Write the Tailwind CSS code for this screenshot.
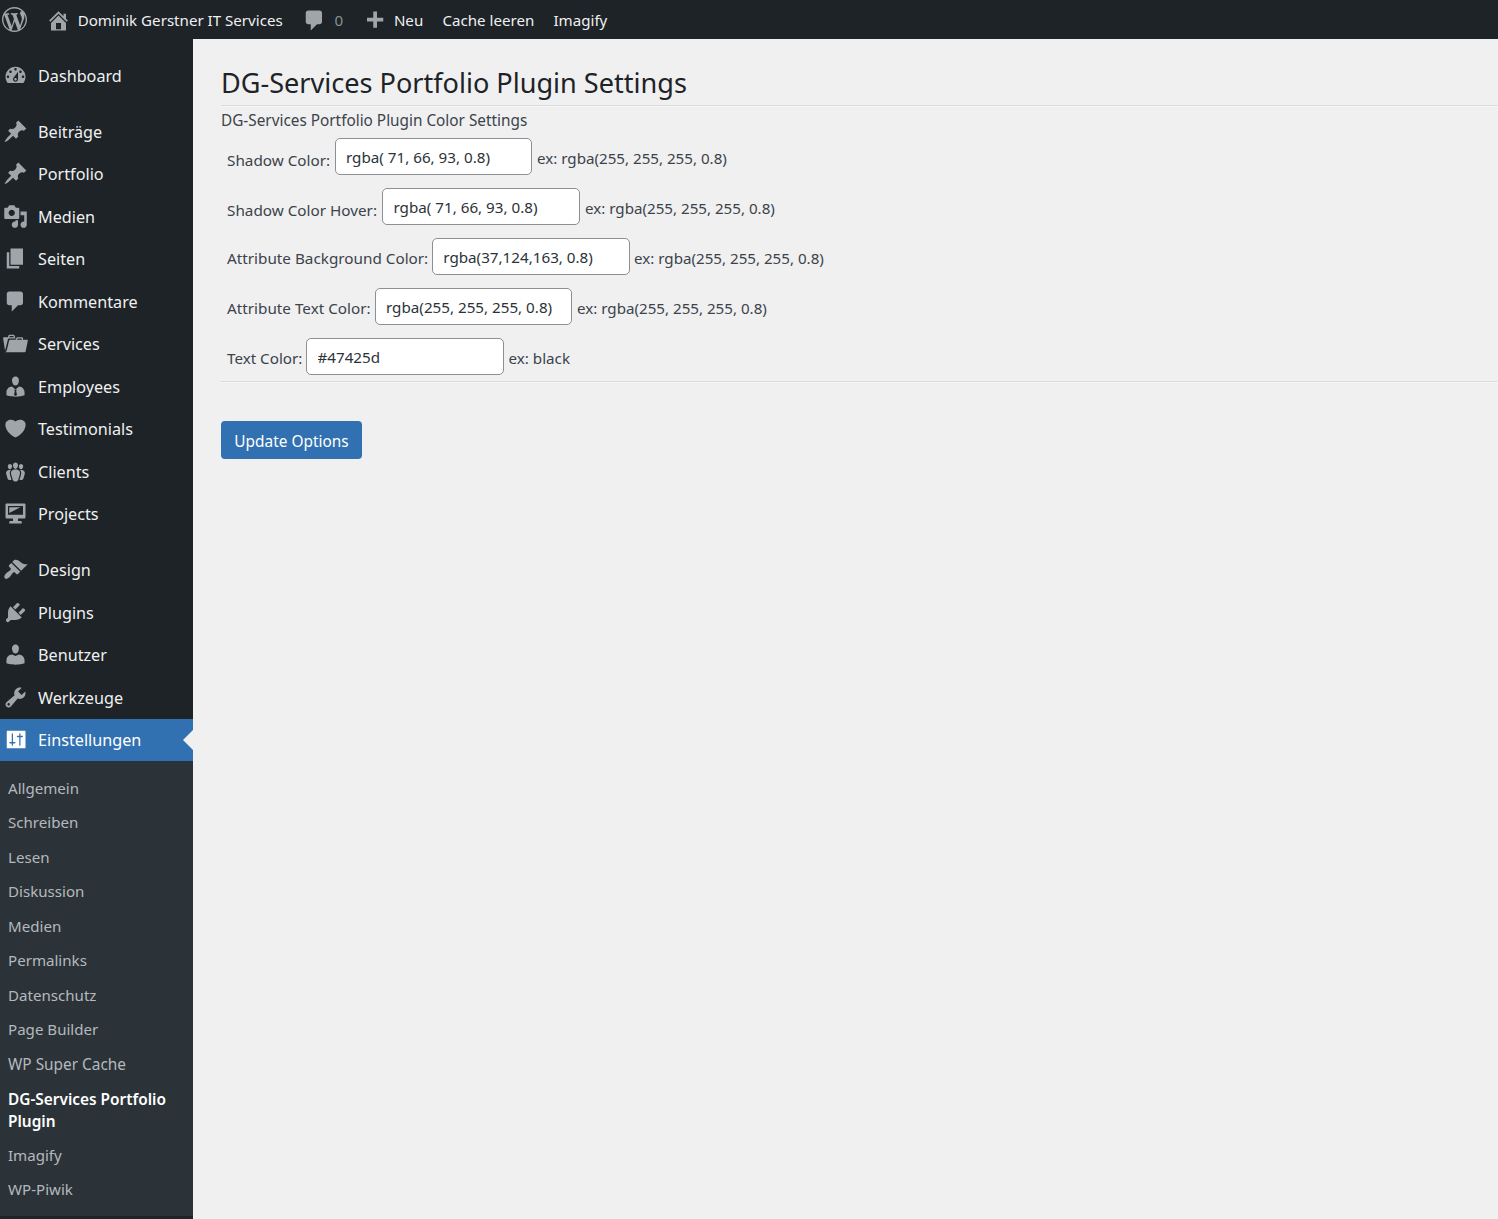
<!DOCTYPE html>
<html lang="de">
<head>
<meta charset="utf-8">
<title>DG-Services Portfolio Plugin Settings</title>
<script src="https://cdn.jsdelivr.net/npm/@tailwindcss/browser@4"></script>
</head>
<body class="h-[1219px] overflow-hidden bg-[#f0f0f1] font-['Noto_Sans','Open_Sans',sans-serif] text-[15.2px] text-[#3c434a]">

<header class="flex h-[39px] items-center bg-[#1d2327] text-[15.12px] leading-[39px] text-[#f0f0f1]">
  <a class="ml-[2px] w-[46px] shrink-0 text-[#a0a5aa]"><svg class="size-[25px]" viewBox="0 0 20 20" fill="currentColor"><path d="M20 10c0-5.51-4.49-10-10-10C4.48 0 0 4.49 0 10c0 5.52 4.48 10 10 10 5.51 0 10-4.48 10-10zM7.78 15.37L4.37 6.22c.55-.02 1.17-.08 1.17-.08.5-.06.44-1.13-.06-1.11 0 0-1.45.11-2.37.11-.18 0-.37 0-.58-.01C4.12 2.69 6.87 1.11 10 1.11c2.33 0 4.45.87 6.05 2.34-.68-.11-1.65.39-1.65 1.58 0 .74.45 1.36.9 2.1.35.61.55 1.36.55 2.46 0 1.49-1.4 5-1.4 5l-3.03-8.37c.54-.02.82-.17.82-.17.5-.05.44-1.25-.06-1.22 0 0-1.44.12-2.38.12-.87 0-2.33-.12-2.33-.12-.5-.03-.56 1.2-.06 1.22l.92.08 1.26 3.41zM17.41 10c.24-.64.74-1.87.43-4.25.7 1.29 1.05 2.71 1.05 4.25 0 3.29-1.73 6.24-4.4 7.78.97-2.59 1.94-5.2 2.92-7.78zM6.1 18.09C3.12 16.65 1.11 13.53 1.11 10c0-1.3.23-2.48.72-3.59C3.25 10.3 4.67 14.2 6.1 18.09zm4.03-6.63l2.58 6.98c-.86.29-1.76.45-2.71.45-.79 0-1.57-.11-2.29-.33.81-2.38 1.62-4.74 2.42-7.1z"/></svg></a>
  <a class="flex w-[255px] shrink-0 items-center pt-px whitespace-nowrap"><svg class="mr-[5.4px] -ml-[2px] size-[25px] shrink-0 text-[#a0a5aa]" viewBox="0 0 20 20" fill="currentColor"><path d="M16 8.5l1.53 1.53-1.06 1.06L10 4.6l-6.47 6.49-1.06-1.06L10 2.5l4 4v-2h2v4zm-6-2.46l6 5.99V18H4v-5.97zM12 17v-5H8v5h4z"/></svg><span class="pl-[1.3px]">Dominik Gerstner IT Services</span></a>
  <a class="flex w-[60px] shrink-0 items-center pt-px text-[#8b9095]"><svg class="mt-px mr-[7.4px] -ml-px size-[25px] shrink-0 text-[#a0a5aa]" viewBox="0 0 20 20" fill="currentColor"><path d="M5 2h9c1.1 0 2 .9 2 2v7c0 1.1-.9 2-2 2h-2l-5 5v-5H5c-1.1 0-2-.9-2-2V4c0-1.1.9-2 2-2z"/></svg>0</a>
  <a class="flex w-[79.5px] shrink-0 items-center pt-px"><svg class="mt-[3px] mr-[7.4px] -ml-[1.5px] size-[25px] shrink-0 text-[#a0a5aa]" viewBox="0 0 20 20" fill="currentColor"><path d="M17 7v3h-5v5H9v-5H4V7h5V2h3v5h5z"/></svg>Neu</a>
  <a class="w-[111px] shrink-0 pt-px">Cache leeren</a>
  <a class="pt-px">Imagify</a>
</header>

<div class="flex h-[1180px]">
  <aside class="w-[193px] shrink-0 bg-[#1d2327] pt-[15px]">
    <nav id="menu" class="text-[16.2px] text-[#f0f0f1]"></nav>
    <ul class="flex h-[455px] flex-col bg-[#2c3338] pt-[10.3px] pl-2 text-[15.1px] leading-[22px] text-[#b4b9be]">
      <li class="h-[34.5px] py-[6px]">Allgemein</li>
      <li class="h-[34.5px] py-[6px]">Schreiben</li>
      <li class="h-[34.5px] py-[6px]">Lesen</li>
      <li class="h-[34.5px] py-[6px]">Diskussion</li>
      <li class="h-[34.5px] py-[6px]">Medien</li>
      <li class="h-[34.5px] py-[6px]">Permalinks</li>
      <li class="h-[34.5px] py-[6px]">Datenschutz</li>
      <li class="h-[34.5px] py-[6px]">Page Builder</li>
      <li class="h-[34.5px] py-[7px] text-[15.4px]">WP Super Cache</li>
      <li class="h-[56.5px] py-[7.7px] text-[15.4px] font-semibold text-white">DG-Services Portfolio<br>Plugin</li>
      <li class="h-[34.5px] py-[6px]">Imagify</li>
      <li class="h-[34.5px] py-[6px]">WP-Piwik</li>
    </ul>
  </aside>

  <main class="grow pt-[26px] pl-[28px]">
    <h1 class="h-[40px] text-[27.08px] leading-[36px] text-[#1d2327]">DG-Services Portfolio Plugin Settings</h1>
    <hr class="border-t border-b border-t-[#dcdcde] border-b-[#f6f7f7]">
    <p class="h-[31px] text-[15.34px] leading-[26px]">DG-Services Portfolio Plugin Color Settings</p>
    <form class="pl-[6px]">
      <div class="flex h-[50px] items-start leading-[41px]"><label class="w-[108px] pt-[2px] text-[15.27px]">Shadow Color:</label><input class="mr-[5px] h-[37px] w-[197px] rounded-[5px] border border-[#8c8f94] bg-white px-[10px] leading-[35px] text-[#2c3338]" value="rgba( 71, 66, 93, 0.8)"><span class="text-[15.15px]">ex: rgba(255, 255, 255, 0.8)</span></div>
      <div class="flex h-[50px] items-start leading-[41px]"><label class="w-[155px] pt-[2px] text-[15.27px]">Shadow Color Hover:</label><input class="mr-[5px] h-[37px] w-[198px] rounded-[5px] border border-[#8c8f94] bg-white px-[10.5px] leading-[35px] text-[#2c3338]" value="rgba( 71, 66, 93, 0.8)"><span class="text-[15.15px]">ex: rgba(255, 255, 255, 0.8)</span></div>
      <div class="flex h-[50px] items-start leading-[41px]"><label class="w-[205px] text-[15.27px]">Attribute Background Color:</label><input class="mr-[4px] h-[37px] w-[198px] rounded-[5px] border border-[#8c8f94] bg-white px-[10.3px] leading-[35px] text-[#2c3338]" value="rgba(37,124,163, 0.8)"><span class="text-[15.15px]">ex: rgba(255, 255, 255, 0.8)</span></div>
      <div class="flex h-[50px] items-start leading-[41px]"><label class="w-[148px] text-[15.27px]">Attribute Text Color:</label><input class="mr-[5px] h-[37px] w-[197px] rounded-[5px] border border-[#8c8f94] bg-white px-[10px] leading-[35px] text-[#2c3338]" value="rgba(255, 255, 255, 0.8)"><span class="text-[15.15px]">ex: rgba(255, 255, 255, 0.8)</span></div>
      <div class="flex h-[43px] items-start leading-[41px]"><label class="w-[79px]">Text Color:</label><input class="mr-[4.5px] h-[37px] w-[198px] rounded-[5px] border border-[#8c8f94] bg-white px-[10.5px] leading-[35px] text-[#2c3338]" value="#47425d"><span>ex: black</span></div>
    </form>
    <hr class="border-t border-b border-t-[#dcdcde] border-b-[#f6f7f7]">
    <button class="mt-[38px] h-[38px] w-[141px] rounded-[4px] bg-[#3271b1] pt-[4px] text-[15.4px] text-white">Update Options</button>
  </main>
</div>

<script>
const icons = {
  dashboard: 'M3.76 16h12.48c1.1-1.37 1.76-3.11 1.76-5 0-4.42-3.58-8-8-8s-8 3.58-8 8c0 1.89.66 3.63 1.76 5zM10 4c.55 0 1 .45 1 1s-.45 1-1 1-1-.45-1-1 .45-1 1-1zM6 6c.55 0 1 .45 1 1s-.45 1-1 1-1-.45-1-1 .45-1 1-1zm8 0c.55 0 1 .45 1 1s-.45 1-1 1-1-.45-1-1 .45-1 1-1zm-5.37 5.55L12 7v6c0 1.1-.9 2-2 2s-2-.9-2-2c0-.57.24-1.08.63-1.45zM4 10c.55 0 1 .45 1 1s-.45 1-1 1-1-.45-1-1 .45-1 1-1zm12 0c.55 0 1 .45 1 1s-.45 1-1 1-1-.45-1-1 .45-1 1-1zm-5 3c0-.55-.45-1-1-1s-1 .45-1 1 .45 1 1 1 1-.45 1-1z',
  pin: 'M10.44 3.02l1.82-1.82 6.36 6.35-1.83 1.82c-1.05-.68-2.48-.57-3.41.36l-.75.75c-.92.93-1.04 2.35-.35 3.41l-1.83 1.82-2.41-2.41-2.8 2.79c-.42.42-3.38 2.71-3.8 2.29s1.86-3.39 2.28-3.81l2.79-2.79L4.1 9.36l1.83-1.82c1.05.69 2.48.57 3.4-.36l.75-.75c.93-.92 1.05-2.35.36-3.41z',
  media: 'M13 11V4c0-.55-.45-1-1-1h-1.67L9 1H5L3.67 3H2c-.55 0-1 .45-1 1v7c0 .55.45 1 1 1h10c.55 0 1-.45 1-1zM7 4.5c1.38 0 2.5 1.12 2.5 2.5S8.38 9.5 7 9.5 4.5 8.38 4.5 7 5.62 4.5 7 4.5zM14 6h5v10.5c0 1.38-1.12 2.5-2.5 2.5S14 17.88 14 16.5s1.12-2.5 2.5-2.5c.17 0 .34.02.5.05V9h-3V6zm-4 8.05V13h2v3.5c0 1.38-1.12 2.5-2.5 2.5S7 17.88 7 16.5 8.12 14 9.5 14c.17 0 .34.02.5.05z',
  page: 'M6 15V2h10v13H6zm-1 1h8v2H3V5h2v11z',
  comment: 'M5 2h9c1.1 0 2 .9 2 2v7c0 1.1-.9 2-2 2h-2l-5 5v-5H5c-1.1 0-2-.9-2-2V4c0-1.1.9-2 2-2z',
  folders: 'M4 5H.78c-.37 0-.74.32-.69.84l1.56 9.99S3.5 8.47 3.86 6.7c.11-.53.61-.7.98-.7H10s-.7-2.08-.77-2.31C9.11 3.25 8.89 3 8.45 3H5.14c-.36 0-.7.23-.8.64C4.25 4.04 4 5 4 5zm4.88 0h-4s.42-1 .87-1h2.13c.48 0 1 1 1 1zM2.67 16.25c-.31.47-.76.75-1.26.75h15.73c.54 0 .92-.31 1.03-.83.44-2.19 1.68-8.44 1.68-8.44.07-.5-.3-.73-.62-.73H16V5.53c0-.16-.26-.53-.66-.53h-3.76c-.52 0-.87.58-.87.58L10 7H5.59c-.32 0-.63.19-.69.5 0 0-1.59 6.7-1.72 7.33-.07.37-.22.99-.51 1.42zM15.38 7H11s.58-1 1.13-1h2.29c.71 0 .96 1 .96 1z',
  businessman: 'M10 9.25c-2.27 0-2.73-3.44-2.73-3.44C7 4.02 7.82 2 9.97 2c2.16 0 2.98 2.02 2.71 3.81 0 0-.41 3.44-2.68 3.44zM7.2 10L10 12.4 12.8 10c2.4 0 4.44 2.33 4.44 4.53v2.49s-3.65 1.13-7.24 1.13c-3.65 0-7.24-1.13-7.24-1.13v-2.49c0-2.25 1.94-4.53 4.44-4.53zM8.9 12.6l.6 1-.7 3.1L10 17.6l1.2-.9-.7-3.1.6-1z',
  heart: 'M10 17.12c3.33-1.4 5.74-3.79 7.04-6.21 1.28-2.41 1.46-4.81.32-6.25-1.03-1.29-2.37-1.78-3.73-1.74s-2.68.63-3.63 1.46c-.95-.83-2.27-1.42-3.63-1.46s-2.7.45-3.73 1.74c-1.14 1.44-.96 3.84.34 6.25 1.28 2.42 3.69 4.81 7.02 6.21z',
  groups: 'M8.03 4.46c-.29 1.28.55 3.46 1.97 3.46 1.41 0 2.25-2.18 1.96-3.46-.22-.98-1.08-1.63-1.96-1.63-.89 0-1.74.65-1.97 1.63zm-4.13.9c-.25 1.08.47 2.93 1.67 2.93s1.92-1.85 1.67-2.93c-.19-.83-.92-1.39-1.67-1.39s-1.48.56-1.67 1.39zm8.86 0c-.25 1.08.47 2.93 1.66 2.93 1.2 0 1.92-1.85 1.67-2.93-.19-.83-.92-1.39-1.67-1.39-.74 0-1.47.56-1.66 1.39zm-.59 11.43l1.25-4.3C14.2 10 12.71 8.47 10 8.47c-2.72 0-4.21 1.53-3.44 4.02l1.26 4.3C8.05 17.51 9 18 10 18c.98 0 1.94-.49 2.17-1.21zm-6.1-7.63c-.49.67-.96 1.83-.42 3.59l1.12 3.79c-.34.2-.77.31-1.2.31-.85 0-1.65-.41-1.85-1.03l-1.07-3.65c-.65-2.11.61-3.4 2.92-3.4.27 0 .54.02.79.06-.1.1-.2.22-.29.33zm8.35-.39c2.31 0 3.58 1.29 2.92 3.4l-1.07 3.65c-.2.62-1 1.03-1.85 1.03-.43 0-.86-.11-1.2-.31l1.11-3.77c.55-1.78.08-2.94-.42-3.61-.08-.11-.18-.23-.28-.33.25-.04.51-.06.79-.06z',
  desktop: 'M3 2h14c.55 0 1 .45 1 1v10c0 .55-.45 1-1 1h-5v2h2c.55 0 1 .45 1 1v1H5v-1c0-.55.45-1 1-1h2v-2H3c-.55 0-1-.45-1-1V3c0-.55.45-1 1-1zm13 9V4H4v7h12zM5 5h9L5 9.500V5z',
  brush: 'M14.48 11.06L7.41 3.99l1.5-1.5c.5-.56 2.3-.47 3.51.32 1.21.8 1.43 1.28 2.91 2.1 1.18.64 2.45 1.26 4.45.85zm-.71.71L6.7 4.7 4.93 6.47c-.39.39-.39 1.02 0 1.41l1.06 1.06c.39.39.39 1.03 0 1.42-.6.6-1.43 1.11-2.21 1.69-.35.26-.7.53-1.01.84C1.43 14.23.4 16.08 1.4 17.07c.99 1 2.84-.03 4.18-1.36.31-.31.58-.66.85-1.02.57-.78 1.08-1.61 1.69-2.21.39-.39 1.02-.39 1.41 0l1.06 1.06c.39.39 1.02.39 1.41 0z',
  plug: 'M13.11 4.36L9.87 7.6 8 5.73l3.24-3.24c.35-.34 1.05-.2 1.56.32.52.51.66 1.21.31 1.55zm-8 1.77l.91-1.12 9.01 9.01-1.19.84c-.71.71-2.63 1.16-3.82 1.16H6.14L4.9 17.26c-.59.59-1.54.59-2.12 0-.59-.58-.59-1.53 0-2.12l1.24-1.24v-3.88c0-1.13.4-3.19 1.09-3.89zm7.26 3.97l3.24-3.24c.34-.35 1.04-.21 1.55.31.52.51.66 1.21.31 1.55l-3.24 3.25z',
  user: 'M10 9.25c-2.27 0-2.73-3.44-2.73-3.44C7 4.02 7.82 2 9.97 2c2.16 0 2.98 2.02 2.71 3.81 0 0-.41 3.44-2.68 3.44zm0 1.85L12.72 10c2.39 0 4.52 2.33 4.52 4.53v2.49s-3.65 1.13-7.24 1.13c-3.65 0-7.24-1.13-7.24-1.13v-2.49c0-2.25 1.94-4.48 4.47-4.48z',
  wrench: 'M16.68 9.77c-1.34 1.34-3.3 1.67-4.95.99l-5.41 6.52c-.99.99-2.59.99-3.58 0s-.99-2.59 0-3.57l6.52-5.42c-.68-1.65-.35-3.61.99-4.95 1.28-1.28 3.12-1.62 4.72-1.06l-2.89 2.89 2.82 2.82 2.86-2.87c.53 1.58.18 3.39-1.08 4.65zM3.81 16.21c.4.39 1.04.39 1.43 0 .4-.4.4-1.04 0-1.43-.39-.4-1.03-.4-1.43 0-.39.39-.39 1.03 0 1.43z',
  sliders: 'M18 16.5V3.5c0-.3-.2-.5-.5-.5h-14c-.3 0-.5.2-.5.5v13c0 .3.2.5.5.5h14c.3 0 .5-.2.5-.5zM8 12h1.5c.3 0 .5.2.5.5l-.5.7H8v1.3c0 .28-.22.5-.5.5s-.5-.22-.5-.5v-1.3H5.5l-.5-.7c0-.3.2-.5.5-.5H7V5.5c0-.28.22-.5.5-.5s.5.22.5.5V12zm5-3.8h-1.5l-.5-.7c0-.3.2-.5.5-.5H13V5.5c0-.28.22-.5.5-.5s.5.22.5.5V7h1.5c.3 0 .5.2.5.5l-.5.7H14v6.3c0 .28-.22.5-.5.5s-.5-.22-.5-.5V8.2z'
};
const groups = [
  [['Dashboard', 'dashboard']],
  [['Beiträge', 'pin'], ['Portfolio', 'pin'], ['Medien', 'media'], ['Seiten', 'page'], ['Kommentare', 'comment'], ['Services', 'folders'], ['Employees', 'businessman'], ['Testimonials', 'heart'], ['Clients', 'groups'], ['Projects', 'desktop']],
  [['Design', 'brush'], ['Plugins', 'plug'], ['Benutzer', 'user'], ['Werkzeuge', 'wrench'], ['Einstellungen', 'sliders']]
];
document.getElementById('menu').innerHTML = groups.map(items =>
  '<div class="mb-[13.5px] last:mb-0">' + items.map(([label, icon]) => {
    const active = icon === 'sliders';
    return `<a class="relative flex items-center ${active ? 'h-[42px] bg-[#3271b1] text-white' : 'h-[42.5px]'}">
      <svg class="mr-[10px] ml-[3px] size-[25px] shrink-0 ${active ? 'text-white' : 'text-[#a0a5aa]'}" viewBox="0 0 20 20" fill="currentColor" fill-rule="evenodd"><path d="${icons[icon]}"/></svg>
      <span class="pt-[1.5px]">${label}</span>${active ? '<span class="absolute top-[11px] right-0 border-y-[10px] border-r-[10px] border-y-transparent border-r-[#f0f0f1]"></span>' : ''}</a>`;
  }).join('') + '</div>').join('');
</script>
</body>
</html>
